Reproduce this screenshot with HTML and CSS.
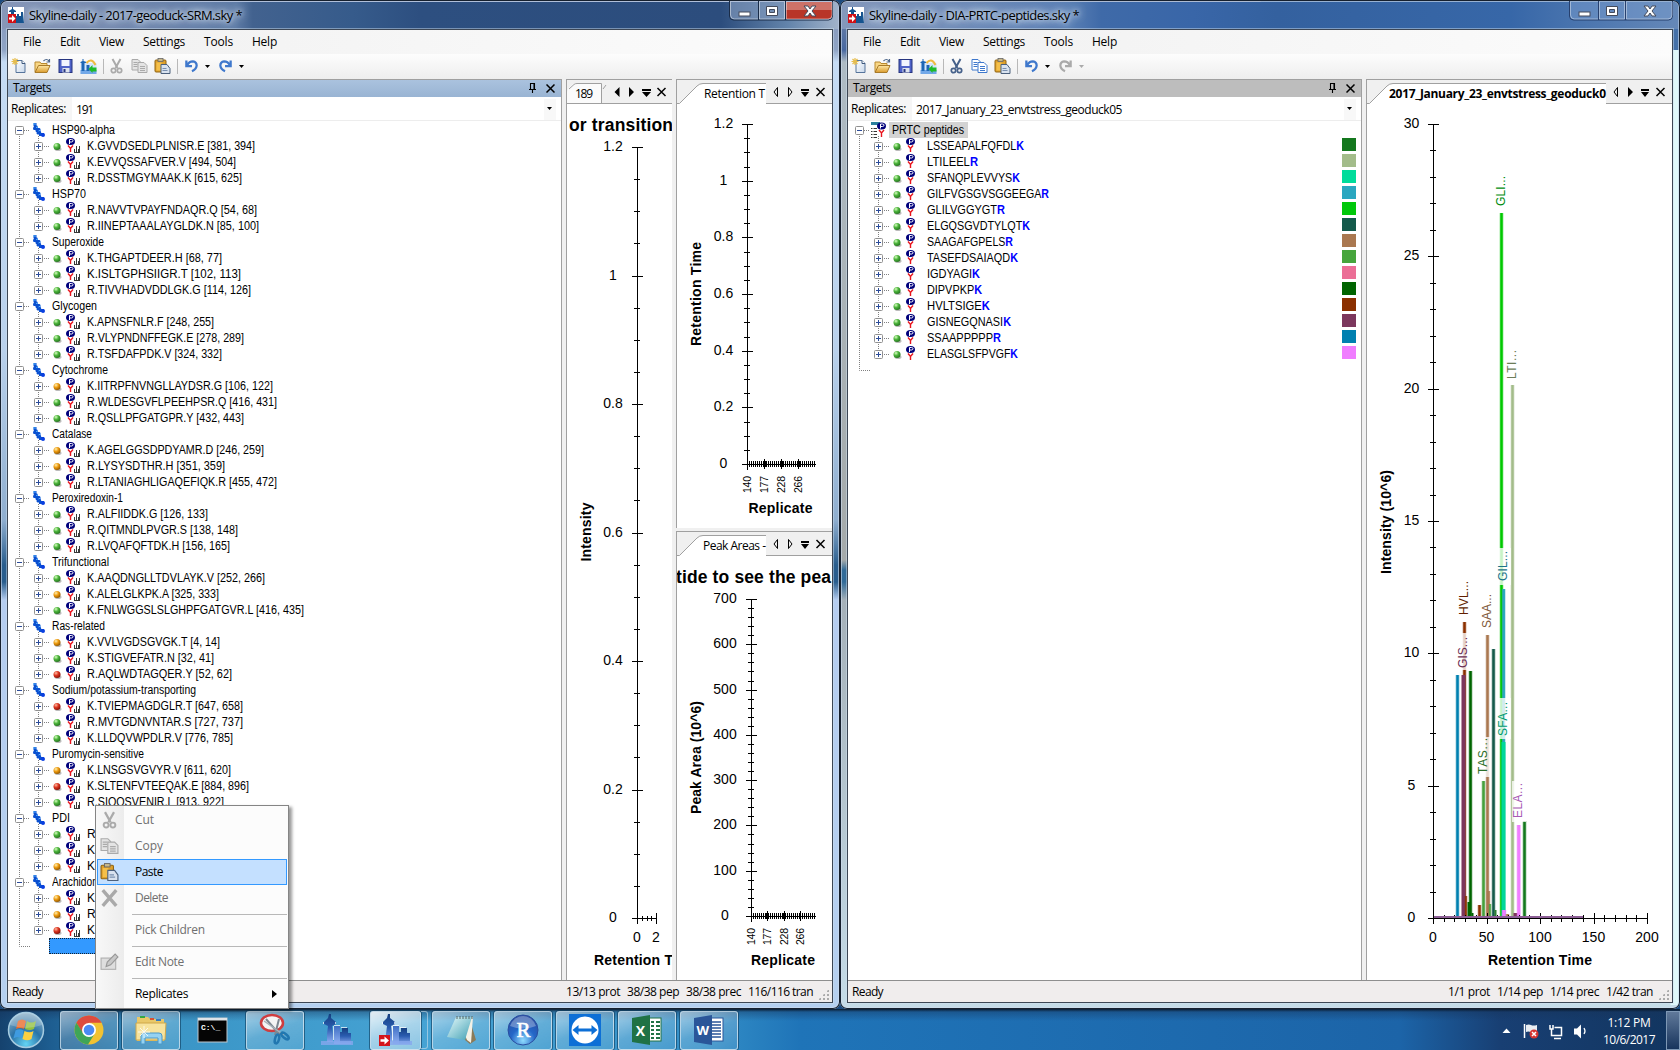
FILE: index.html
```html
<!DOCTYPE html>
<html lang="en">
<head>
<meta charset="utf-8">
<title>Skyline-daily</title>
<link rel="stylesheet" href="styles.css">
</head>
<body>
<svg class="sprite" aria-hidden="true">
  <defs>
    <linearGradient id="gPaper" x1="0" y1="0" x2="1" y2="1"><stop offset="0" stop-color="#fff"/><stop offset="1" stop-color="#c9d8ea"/></linearGradient>
    <linearGradient id="gFolder" x1="0" y1="0" x2="0" y2="1"><stop offset="0" stop-color="#ffe9a8"/><stop offset="1" stop-color="#d99a2b"/></linearGradient>
    <radialGradient id="gGreen" cx=".35" cy=".3" r=".7"><stop offset="0" stop-color="#d8ffc0"/><stop offset=".5" stop-color="#4cb43c"/><stop offset="1" stop-color="#287a20"/></radialGradient>
    <radialGradient id="gOrange" cx=".35" cy=".3" r=".7"><stop offset="0" stop-color="#fff0b0"/><stop offset=".5" stop-color="#ee9b10"/><stop offset="1" stop-color="#9a5d00"/></radialGradient>
    <radialGradient id="gRed" cx=".35" cy=".3" r=".7"><stop offset="0" stop-color="#ffb9a0"/><stop offset=".5" stop-color="#dc3520"/><stop offset="1" stop-color="#8d1208"/></radialGradient>
    <radialGradient id="gOrb" cx=".5" cy=".9" r=".9"><stop offset="0" stop-color="#62d4f4"/><stop offset=".5" stop-color="#2a73a8"/><stop offset="1" stop-color="#8fb2c8"/></radialGradient>
    <radialGradient id="gR" cx=".5" cy=".85" r=".9"><stop offset="0" stop-color="#8fdcff"/><stop offset=".45" stop-color="#2467c8"/><stop offset="1" stop-color="#2a4a9c"/></radialGradient>
    <linearGradient id="gCity" x1="0" y1="0" x2="0" y2="1"><stop offset="0" stop-color="#153f80"/><stop offset=".5" stop-color="#2a5cb0"/><stop offset="1" stop-color="#86a8ee"/></linearGradient>
    <linearGradient id="gCity2" x1="0" y1="0" x2="0" y2="1"><stop offset="0" stop-color="#3f6fc4"/><stop offset="1" stop-color="#8fb0f2"/></linearGradient>
    <linearGradient id="gPad" x1="0" y1="0" x2="1" y2="1"><stop offset="0" stop-color="#e8fbfb"/><stop offset="1" stop-color="#3f9fb4"/></linearGradient>
  </defs>
  <symbol id="i-app" viewBox="0 0 16 16"><rect width="16" height="16" fill="#fff"/><path d="M4 0h1v2l3 2v1H6v3H3V5H1V4l3-2zM9 7h2v9H8V9h1zM11 9h2v7h-2zM13 5h2l1 11h-3z" fill="#15538f"/><rect y="7" width="8" height="9" fill="#cf1016"/><path d="M1 10.500h3V8l3.500 3.500L4 15v-2.500H1z" fill="#fff"/></symbol>
  <symbol id="i-new" viewBox="0 0 16 16"><path d="M4.500 2.500h6l3 3v9h-9z" fill="url(#gPaper)" stroke="#56749b"/><path d="M10.500 2.500v3h3" fill="#fff" stroke="#3d587d"/><path d="M3.500 0v7M0 3.500h7M1 1l5 5M6 1L1 6" stroke="#e6bd4d" stroke-width="1.200"/></symbol>
  <symbol id="i-open" viewBox="0 0 16 16"><path d="M.5 14V4h5l1 1.500h6V8" fill="#f8d684" stroke="#b98a30"/><path d="M.5 14.500L4 7.500h11.500L12.500 14.500z" fill="url(#gFolder)" stroke="#a87a28"/><path d="M9 3q3-3 5.500 0M15 1v3h-3" fill="none" stroke="#50698c" stroke-width="1.200"/></symbol>
  <symbol id="i-save" viewBox="0 0 16 16"><rect x="1.500" y="1.500" width="13" height="13" fill="#4f62c8" stroke="#27357f"/><rect x="4" y="2" width="8" height="6" fill="#f1f4ff"/><rect x="5" y="10" width="7" height="4.500" fill="#dfe4ee"/><rect x="6" y="11" width="2" height="3" fill="#27357f"/></symbol>
  <symbol id="i-import" viewBox="0 0 16 16"><rect y="5" width="16" height="11" fill="#d5e6fa"/><rect y="12" width="16" height="4" fill="#72a8e8"/><path d="M2 1h1v2l3 1v1H4v8H1V5H0V4l2-1zM6 7h3v6H6z" fill="#1d67b5"/><path d="M6 5q5-6 9 2" fill="none" stroke="#efbb42" stroke-width="2"/><path d="M8 11l4-4v2.500h4v4h-4V15z" fill="#1dbb28"/></symbol>
  <symbol id="i-cut" viewBox="0 0 16 16"><path d="M4 1l5 9M12 1L7 10" fill="none" stroke="currentColor" stroke-width="2"/><circle cx="5" cy="12.500" r="2.200" fill="none" stroke="currentColor" stroke-width="1.700"/><circle cx="11" cy="12.500" r="2.200" fill="none" stroke="currentColor" stroke-width="1.700"/></symbol>
  <symbol id="i-copy" viewBox="0 0 16 16"><g fill="var(--sheet,#fff)" stroke="currentColor"><path d="M.5 1.500h6l2.500 2.500v8H.5z"/><path d="M6.500 4.500h6l3 3v7h-9z"/><path d="M2 4.500h4M2 6.500h4M2 8.500h4M8.500 8.500h5M8.500 10.500h5M8.500 12.500h5"/></g></symbol>
  <symbol id="i-paste" viewBox="0 0 16 16"><rect x=".5" y="2" width="11" height="12" rx="1" fill="#dfa12c" stroke="#916512"/><rect x="3.500" y=".5" width="5" height="3" fill="#c9b98a" stroke="#666" stroke-width=".8"/><path d="M2 4.500h5v8H2z" fill="#f5c04a"/><path d="M6.500 6.500h6l3 4v5h-9z" fill="#d8e2ef" stroke="#4b607d"/><path d="M8 10.500h4M8 12.500h5" stroke="#7890b0"/></symbol>
  <symbol id="i-undo" viewBox="0 0 16 16"><path d="M2.500 2v6h6M3.500 7q2-4 6-4 4 .5 4 4.500-.5 4-5 6" fill="none" stroke="currentColor" stroke-width="2.400"/></symbol>
  <symbol id="i-redo" viewBox="0 0 16 16"><path d="M13.500 2v6h-6M12.500 7q-2-4-6-4-4 .5-4 4.500.5 4 5 6" fill="none" stroke="currentColor" stroke-width="2.400"/></symbol>
  <symbol id="i-caret" viewBox="0 0 6 4"><path d="M0 0h5L2.500 3z" fill="currentColor"/></symbol>
  <symbol id="i-delete" viewBox="0 0 16 16"><path d="M2 1l12 14M14 1L2 15" stroke="#a9a9a9" stroke-width="3"/></symbol>
  <symbol id="i-note" viewBox="0 0 16 16"><rect x=".5" y="4.500" width="13" height="10" fill="#dedede" stroke="#b0b0b0"/><path d="M5 12l1-4L13 1l2.500 2.500L9 10.500z" fill="#c8c8c8" stroke="#989898"/></symbol>
  <symbol id="i-pin" viewBox="0 0 8 10"><path d="M1.500 6V.5h4V6M0 6.500h7M3.500 7v3M5 1v5" fill="none" stroke="#000" stroke-width="1.100"/></symbol>
  <symbol id="i-x" viewBox="0 0 9 9"><path d="M.5.5l8 8M8.500.5l-8 8" stroke="#000" stroke-width="1.500"/></symbol>
  <symbol id="i-pep" viewBox="0 0 16 14"><ellipse cx="4.500" cy="3.500" rx="4.500" ry="3.500" fill="#00007b"/><path d="M3.500 6V1.500h2q1.500 0 1.500 1.200T5.500 4H4" fill="none" stroke="#fff"/><path d="M2 7.500L4.500 10.500 7 7.500M4.500 10v4.500" fill="none" stroke="#e8141c" stroke-width="1.400"/></symbol>
  <symbol id="i-spec" viewBox="0 0 7 7"><path d="M1.500 3v3M3.500 0v6M5.500 3v3M1 6.500h6M6.500 0v6" stroke="#222" stroke-width=".9"/></symbol>
  <symbol id="i-prot" viewBox="0 0 13 14"><path d="M1.500 1.500h3M4 2L2.500 5.500 6 4.500M3.500 7.500l3.500-1-1 3.500 3-1M7 11.500h3l2 0" fill="none" stroke="#0a50d0" stroke-width="3" stroke-linejoin="round"/><circle cx="11" cy="12" r="2" fill="#0a3fe0"/><path d="M1 1h3M4 4.500l2-.5M6.500 8l2-1" stroke="#58b4ff" stroke-width="1"/></symbol>
  <symbol id="i-city" viewBox="0 0 32 32"><path d="M8 0h2v4l5 4v2l-4 2 1 8v8H6v-8l1-8-4-2V8l4-4z" fill="url(#gCity)"/><path d="M13 12h6v18h-6z" fill="url(#gCity2)"/><path d="M19 18h4v12h-4zM21 14h6v5h3v11h-9z" fill="url(#gCity)"/><path d="M2.500 8v2M14.500 8v2M13 11.500h6M20 13.500h6M12.500 12v14" stroke="#fff" opacity=".7"/><rect y="27" width="32" height="4" fill="#86a8ee" opacity=".8"/></symbol>
</svg>

<main class="desktop">
  <section class="window window-srm">
    <header class="titlebar">
      <svg class="app-icon"><use href="#i-app"/></svg>
      <h1 class="title"><span data-w="213">Skyline-daily - 2017-geoduck-SRM.sky *</span></h1>
      <div class="caption">
        <svg viewBox="0 0 104 21" width="104" height="21"><path d="M.5 0v15q0 4 4 4h95q4 0 4-4V0M29.500 0v19M56.500 0v19" fill="none" stroke="#1a2c48"/><path class="btn-min" d="M1 1h28v17H5q-4 0-4-4zM30 1h26v17H30z"/><path class="btn-close" d="M57 1h46v13q0 4-4 4H57z"/><path d="M57 1h46v8H57z" fill="#fff" opacity=".3"/><path d="M1.500 1v13q0 4 4 4H29M30.500 1v17h25V1M57.500 1v17H99q4 0 4-4V1" fill="none" stroke="#fff" opacity=".45"/><rect x="10" y="11" width="11" height="4" fill="#fff" stroke="#444b5c"/><path d="M37.500 5.500h11v9h-11zM40.500 8.500h5v3h-5z" fill="#fff" stroke="#444b5c" fill-rule="evenodd"/><path d="M75 5h4l2 3 2-3h4l-4 5 4 5h-4l-2-3-2 3h-4l4-5z" fill="#fff" stroke="#444b5c"/></svg>
      </div>
    </header>
    <div class="client">
      <nav class="menubar"><span data-w="18">File</span><span data-w="20">Edit</span><span data-w="25">View</span><span data-w="42">Settings</span><span data-w="29">Tools</span><span data-w="25">Help</span></nav>
      <div class="toolbar">
        <svg class="ic"><use href="#i-new"/></svg><svg class="ic"><use href="#i-open"/></svg><svg class="ic"><use href="#i-save"/></svg><svg class="ic"><use href="#i-import"/></svg><i class="sep"></i>
        <svg class="ic off"><use href="#i-cut"/></svg><svg class="ic off sheet-off"><use href="#i-copy"/></svg><svg class="ic"><use href="#i-paste"/></svg><i class="sep last"></i>
        <svg class="ic narrow blue"><use href="#i-undo"/></svg><svg class="caret"><use href="#i-caret"/></svg><svg class="ic narrow blue"><use href="#i-redo"/></svg><svg class="caret"><use href="#i-caret"/></svg>
      </div>
      <div class="dock dock-srm">
        <aside class="targets active">
          <h2 class="pane-title"><span data-w="38">Targets</span><svg class="pin"><use href="#i-pin"/></svg><svg class="close"><use href="#i-x"/></svg></h2>
          <div class="replicates"><label><span data-w="55">Replicates:</span></label><div class="combo"><span data-w="17">191</span><i><svg class="caret"><use href="#i-caret"/></svg></i></div></div>
          <div class="tree" id="tree-srm"></div>
        </aside>
        <section class="panel">
          <svg class="tabs" viewBox="567 80 106 24" width="106" height="24"><path d="M567 103V92q0-3 3-5l3-3h29v20z" fill="#fbfbfb"/><path d="M569 89l5-4.500q1-1 3-1h24.500V103M603 89l3-4" fill="none" stroke="#a0a0a0"/><path d="M567 103.500h106" stroke="#a0a0a0"/><text x="575" y="98" textLength="18">189</text><path d="M619.500 87v10l-5-5zM629 87v10l5-5zM642 89h9v2h-9zM642 92h9l-4.500 5z"/><path d="M657.500 88l8 8M665.500 88l-8 8" class="xx"/></svg>
          <svg class="chart" id="chart-chrom" viewBox="567 104 106 876" width="106" height="876"></svg>
        </section>
        <div class="stack">
          <section class="panel">
            <svg class="tabs" viewBox="677 80 155 24" width="155" height="24"><path d="M679 104l18-18q3-2 6-2h63v20z" fill="#fff"/><path d="M677 103.500h2.500L697 86q2.500-2.500 6-2.500h63M766 103.500h66" fill="none" stroke="#a0a0a0"/><text x="704" y="98" textLength="61">Retention T</text><path d="M777.500 87.500v9l-3.500-4.500zM788.500 87.500v9l3.500-4.500z" fill="none" stroke="#000"/><path d="M801 89h8v2h-8zM801 92h8l-4 5z"/><path d="M816.500 88l8 8M824.500 88l-8 8" class="xx"/></svg>
            <svg class="chart" id="chart-rt" viewBox="677 104 155 424" width="155" height="424"></svg>
          </section>
          <section class="panel">
            <svg class="tabs" viewBox="677 80 155 24" width="155" height="24"><path d="M679 104l18-18q3-2 6-2h63v20z" fill="#fff"/><path d="M677 103.500h2.500L697 86q2.500-2.500 6-2.500h63M766 103.500h66" fill="none" stroke="#a0a0a0"/><text x="703" y="98" textLength="63">Peak Areas -</text><path d="M777.500 87.500v9l-3.500-4.500zM788.500 87.500v9l3.500-4.500z" fill="none" stroke="#000"/><path d="M801 89h8v2h-8zM801 92h8l-4 5z"/><path d="M816.500 88l8 8M824.500 88l-8 8" class="xx"/></svg>
            <svg class="chart" id="chart-area" viewBox="677 556 155 424" width="155" height="424"></svg>
          </section>
        </div>
      </div>
      <footer class="statusbar"><span data-w="31">Ready</span><span class="counts"><b data-w="54">13/13 prot</b><b data-w="52">38/38 pep</b><b data-w="55">38/38 prec</b><b data-w="65">116/116 tran</b></span><i class="grip"></i></footer>
    </div>
  </section>

  <section class="window window-dia">
    <header class="titlebar">
      <svg class="app-icon"><use href="#i-app"/></svg>
      <h1 class="title"><span data-w="210">Skyline-daily - DIA-PRTC-peptides.sky *</span></h1>
      <div class="caption">
        <svg viewBox="0 0 104 21" width="104" height="21"><path d="M.5 0v15q0 4 4 4h95q4 0 4-4V0M29.500 0v19M56.500 0v19" fill="none" stroke="#27406e"/><path class="btn-min" d="M1 1h28v17H5q-4 0-4-4zM30 1h26v17H30z"/><path class="btn-close" d="M57 1h46v13q0 4-4 4H57z"/><path d="M1.500 1v13q0 4 4 4H29M30.500 1v17h25V1M57.500 1v17H99q4 0 4-4V1" fill="none" stroke="#fff" opacity=".4"/><rect x="10" y="11" width="11" height="4" fill="#fff" stroke="#444b5c"/><path d="M37.500 5.500h11v9h-11zM40.500 8.500h5v3h-5z" fill="#fff" stroke="#444b5c" fill-rule="evenodd"/><path d="M75 5h4l2 3 2-3h4l-4 5 4 5h-4l-2-3-2 3h-4l4-5z" fill="#fff" stroke="#444b5c"/></svg>
      </div>
    </header>
    <div class="client">
      <nav class="menubar"><span data-w="18">File</span><span data-w="20">Edit</span><span data-w="25">View</span><span data-w="42">Settings</span><span data-w="29">Tools</span><span data-w="25">Help</span></nav>
      <div class="toolbar">
        <svg class="ic"><use href="#i-new"/></svg><svg class="ic"><use href="#i-open"/></svg><svg class="ic"><use href="#i-save"/></svg><svg class="ic"><use href="#i-import"/></svg><i class="sep"></i>
        <svg class="ic steel"><use href="#i-cut"/></svg><svg class="ic blue"><use href="#i-copy"/></svg><svg class="ic"><use href="#i-paste"/></svg><i class="sep last"></i>
        <svg class="ic narrow blue"><use href="#i-undo"/></svg><svg class="caret"><use href="#i-caret"/></svg><svg class="ic narrow off"><use href="#i-redo"/></svg><svg class="caret off"><use href="#i-caret"/></svg>
      </div>
      <div class="dock dock-dia">
        <aside class="targets">
          <h2 class="pane-title"><span data-w="38">Targets</span><svg class="pin"><use href="#i-pin"/></svg><svg class="close"><use href="#i-x"/></svg></h2>
          <div class="replicates"><label><span data-w="55">Replicates:</span></label><div class="combo"><span data-w="206">2017_January_23_envtstress_geoduck05</span><i><svg class="caret"><use href="#i-caret"/></svg></i></div></div>
          <div class="tree" id="tree-dia"></div>
        </aside>
        <section class="panel">
          <svg class="tabs" viewBox="1367 80 305 24" width="305" height="24"><path d="M1369 104l18-18q3-2 6-2h213v20z" fill="#fff"/><path d="M1367 103.500h2.500L1387 86q2.500-2.500 6-2.500h213M1606 103.500h66" fill="none" stroke="#a0a0a0"/><text x="1389" y="98" textLength="217" font-weight="700">2017_January_23_envtstress_geoduck0</text><path d="M1617.500 87.500v9l-3.500-4.500z" fill="none" stroke="#000"/><path d="M1628 87v10l5-5zM1641 89h8v2h-8zM1641 92h8l-4 5z"/><path d="M1656.500 88l8 8M1664.500 88l-8 8" class="xx"/></svg>
          <svg class="chart" id="chart-dia" viewBox="1367 104 305 876" width="305" height="876"></svg>
        </section>
      </div>
      <footer class="statusbar"><span data-w="31">Ready</span><span class="counts"><b data-w="42">1/1 prot</b><b data-w="46">1/14 pep</b><b data-w="49">1/14 prec</b><b data-w="47">1/42 tran</b></span><i class="grip"></i></footer>
    </div>
  </section>

  <footer class="taskbar">
    <svg class="start" viewBox="0 0 40 40"><circle cx="20" cy="20" r="17.500" fill="url(#gOrb)" stroke="#a5cbe0" stroke-width="1.500"/><path d="M12 11q4-3 8 0l-2 8q-4-2-8 0z" fill="#e86a2a"/><path d="M21 11q4 3 9 0l-2 8q-4 2-9 0z" fill="#93c140"/><path d="M9.500 20.500q4-2.500 8 0l-2 8q-4-3-8 0z" fill="#3f9be0"/><path d="M18.500 21q5 2.500 9 0l-2 8q-4 2.500-9 0z" fill="#fbd043"/><path d="M4 15Q8 3 20 3t16 12q-16 6-32 0" fill="#fff" opacity=".22"/></svg>
    <span class="task"><svg viewBox="0 0 32 32"><circle cx="16" cy="16" r="14.500" fill="#f1c232"/><path d="M3.400 8.800A14.500 14.500 0 0 1 28.600 8.800H16L9.700 19.600z" fill="#dd4b3e"/><path d="M3.400 8.800A14.500 14.500 0 0 0 15 30.500l6.800-11-11 .8z" fill="#3fa557"/><circle cx="16" cy="16" r="7" fill="#fff"/><circle cx="16" cy="16" r="5.300" fill="#4a8af4"/></svg></span>
    <span class="task"><svg viewBox="0 0 32 32"><path d="M2 3h11l2 2h14v22H2z" fill="#e9c869"/><path d="M5 2h5v2H5z" fill="#35a845"/><path d="M15 4h4v2h-4z" fill="#d85132"/><path d="M21 5h5v2h-5z" fill="#367bc0"/><path d="M1 9h30l-1 17H1z" fill="#f7e39d" stroke="#cfa84a"/><path d="M6 30v-8q0-3 3-3h15q3 0 3 3v8h-4v-6H10v6z" fill="#95d2f2" stroke="#4a98c8"/><path d="M9 12v12M3 18h12M5 14l8 8M13 14l-8 8" stroke="#fff" opacity=".8"/></svg></span>
    <span class="task flat"><svg viewBox="0 0 32 32"><rect x="1" y="4" width="29" height="24" fill="#050505" stroke="#bfc6cc"/><path d="M1 4h29v2.500H1z" fill="#dfe4e8"/><text x="4" y="15.500" font-size="8" fill="#fff" font-family="Liberation Mono" font-weight="700">C:\_</text></svg></span>
    <span class="task"><svg viewBox="0 0 32 32"><ellipse cx="13" cy="9" rx="11" ry="8" fill="#f4f4f4" stroke="#cf3d3f" stroke-width="2.500"/><path d="M7 5l14 16M20 5l-4 16" stroke="#7d8791" stroke-width="2"/><path d="M5 7l20 14" stroke="#a9b1b8" stroke-width="1.500"/><ellipse cx="18" cy="25" rx="2" ry="4.500" fill="none" stroke="#2177b0" stroke-width="2.500" transform="rotate(15 18 25)"/><ellipse cx="26" cy="22" rx="2" ry="4.500" fill="none" stroke="#2177b0" stroke-width="2.500" transform="rotate(-50 26 22)"/></svg></span>
    <span class="task flat"><svg viewBox="0 0 32 32"><use href="#i-city"/></svg></span>
    <span class="task lit"><svg viewBox="0 0 32 32"><use href="#i-city"/><rect x="-1" y="21" width="11" height="11" fill="#d4151b"/><path d="M.5 25.300h4V22.500l4.500 4-4.500 4v-2.800h-4z" fill="#fff"/></svg></span><i class="stacked"></i>
    <span class="task"><svg viewBox="0 0 32 32"><path d="M24 3l7 23-6 4-5-4z" fill="#8a7a58"/><path d="M12 3h16l-2 26-4-3z" fill="#f4f1e6"/><path d="M11 3h16l-7 23-18-3z" fill="url(#gPad)"/><path d="M12 2v3M15 2v3M18 2v3M21 2v3M24 2v3M27 2v3" stroke="#566"/></svg></span>
    <span class="task"><svg viewBox="0 0 32 32"><circle cx="16" cy="16" r="15" fill="url(#gR)" stroke="#2b4ea0"/><path d="M3 12Q7 2 16 2t13 10q-13 5-26 0" fill="#fff" opacity=".3"/><text x="16.500" y="22.500" text-anchor="middle" font-family="Liberation Serif" font-size="21" fill="#fff" stroke="#fff" stroke-width=".6">R</text></svg></span>
    <span class="task"><svg viewBox="0 0 32 32"><rect width="32" height="32" fill="#0d6fd6"/><circle cx="16" cy="16" r="13.500" fill="#fff"/><path d="M3.500 16l6-5v3.500h13V11l6 5-6 5v-3.500h-13V21z" fill="#0d6fd6"/></svg></span>
    <span class="task"><svg viewBox="0 0 32 32"><rect x="17" y="4" width="13" height="23" fill="#fff" stroke="#207245"/><path d="M20 7h3v2h-3zM25 7h4v2h-4zM20 11h3v2h-3zM25 11h4v2h-4zM20 15h3v2h-3zM25 15h4v2h-4zM20 19h3v2h-3zM25 19h4v2h-4zM20 23h3v2h-3zM25 23h4v2h-4z" fill="#207245"/><path d="M1 4l18-3v30L1 28z" fill="#207245"/><text x="9.500" y="21.500" text-anchor="middle" font-size="14" font-weight="700" fill="#fff">X</text></svg></span>
    <span class="task"><svg viewBox="0 0 32 32"><rect x="17" y="4" width="13" height="23" fill="#fff" stroke="#2a5699"/><path d="M19 8h9M19 11h9M19 14h9M19 17h9M19 20h9M19 23h9" stroke="#2a5699" stroke-width="1.300"/><path d="M1 4l18-3v30L1 28z" fill="#2a5699"/><text x="9.800" y="21" text-anchor="middle" font-size="13" font-weight="700" fill="#fff">W</text></svg></span>
    <div class="tray">
      <svg viewBox="1500 1010 90 40" width="90" height="40"><path d="M1502.500 1033l4-4.500 4 4.500z" fill="#fff"/><path d="M1524.500 1024v14" stroke="#fff" stroke-width="1.500"/><path d="M1526 1025q3-1 5 0t6 0v7q-3 1-6 0t-5 0z" fill="#e8edf2"/><circle cx="1534" cy="1034" r="4.500" fill="#d63431"/><path d="M1532 1032l4 4M1536 1032l-4 4" stroke="#fff" stroke-width="1.500"/><path d="M1554.500 1027.500h7v8h-10v-6M1550 1025v4h3v-4M1551.500 1029v6M1554 1038.500h7" fill="none" stroke="#fff" stroke-width="1.500"/><path d="M1574 1028.500h3l4-4v14l-4-4h-3z" fill="#fff"/><path d="M1584 1028q2 3 0 6" fill="none" stroke="#fff" stroke-width="1.300"/></svg>
      <div class="clock"><span data-w="43">1:12 PM</span><span data-w="52">10/6/2017</span></div>
      <i class="peek"></i>
    </div>
  </footer>

  <div class="context-menu">
    <div class="item off sheet-off"><svg><use href="#i-cut"/></svg><span data-w="19">Cut</span></div>
    <div class="item off sheet-off"><svg><use href="#i-copy"/></svg><span data-w="28">Copy</span></div>
    <div class="item hot"><svg><use href="#i-paste"/></svg><span data-w="28">Paste</span></div>
    <div class="item off"><svg><use href="#i-delete"/></svg><span data-w="33">Delete</span></div>
    <hr>
    <div class="item off"><svg></svg><span data-w="70">Pick Children</span></div>
    <hr>
    <div class="item off"><svg><use href="#i-note"/></svg><span data-w="49">Edit Note</span></div>
    <hr>
    <div class="item"><svg></svg><span data-w="53">Replicates</span><i class="sub"></i></div>
  </div>
</main>
<script src="app.js"></script>
</body>
</html>
```
FILE: styles.css
```css
* { box-sizing: border-box; }
body { margin: 0; overflow: hidden; font: 12px "Open Sans", "Noto Sans", sans-serif; color: #000; background: #1b4a7e; }
.sprite { display: block; width: 0; height: 0; }
svg { display: block; flex: none; }
[data-w] { white-space: nowrap; flex: none; }
.desktop { position: relative; display: grid; grid-template: 1009px 41px / 840px 840px; width: 1680px; height: 1050px; }

.window { display: grid; grid-template-rows: 29px 974px; padding: 0 7px 6px; border-radius: 7px; box-shadow: inset 0 0 0 1px #16202e, inset 0 0 0 2px #cfdcee99; }
.window-srm { background: linear-gradient(#8294b8 0, #8fa4c5 50px, #c5dcf5 62px, #b9d1ec 350px, #8faecf 520px, #295d8d 565px, #295d8d 582px, #b5cdf0 600px, #b5d0f0); }
.window-srm .titlebar { background: linear-gradient(90deg, #8797b8, #5e7ba6 28%, #42628f 30%, #365b8b 42%, #2d4f80 50%, #2c4d7d 86%, #6384ab 94%, #a0b2ca); }
.window-dia { background: linear-gradient(90deg, transparent 420px, #4470a8 421px) 0 0 / 100% 50px no-repeat, linear-gradient(90deg, transparent 830px, #dff8fa 831px) 0 50px / 100% 955px no-repeat, linear-gradient(#7b8cab 0, #4868a0 50px, #aebbc4 62px, #a5aaaa 560px, #326b98 570px, #326b98 582px, #a5b0b8 600px, #c5dce8); }
.window-dia .titlebar { background: linear-gradient(90deg, #8498bb, #5b80b5 27%, #3f6aa8 31%, #3966a8 42%, #34619f 52%, #3767a8 80%, #6588b8); }
.titlebar { display: flex; align-items: center; margin: 2px 0 0 -5px; width: 836px; padding-left: 6px; height: 27px; border-radius: 5px 5px 0 0; }
.app-icon { width: 16px; height: 16px; margin-top: -1px; }
.title { margin: -2px 0 0 5px; font-size: 13px; font-weight: 400; text-shadow: 0 0 8px #cfdcec, 0 0 10px #cfdcec, 0 0 5px #cfdcec; }
.caption { margin: -8px 5px 0 auto; }
.btn-min { fill: #90a5c6; opacity: .55; }
.btn-close { fill: #b83528; }
.window-dia .btn-close, .window-dia .btn-min { fill: #7da0d0; opacity: .45; }

.client { display: grid; grid-template-rows: 24px 25px 901px 22px; width: 826px; border: 1px solid #3c4654; outline: 1px solid #cfe0f077; background: #f0f0f0; }
.menubar { display: flex; align-items: center; gap: 19px; padding: 0 0 1px 15px; background: linear-gradient(90deg, #f0f0f0, #fcfcfc); }
.toolbar { display: flex; align-items: center; gap: 6px; padding: 0 0 1px 3px; background: linear-gradient(#fdfdfd, #eeeeee); }
.ic { width: 17px; height: 16px; }
.narrow { width: 15px; margin-right: 1px; }
.toolbar .caret { margin: 1px 1px 0 -1px; }
.caret { width: 6px; height: 4px; }
.sep { width: 1px; height: 15px; margin: 0 -2px 0 0; background: #b8b8b8; }
.sep.last { margin-right: 0; }
.blue { color: #3f78cc; }
.steel { color: #46618a; }
.off { color: #aaa; }
.sheet-off { --sheet: #e4e4e4; }

.dock { display: grid; column-gap: 4px; }
.dock-srm { grid-template-columns: 554px 106px 156px; }
.dock-dia { grid-template-columns: 514px 306px; }
.targets { display: grid; grid-template-rows: 17px 24px 1fr; min-width: 0; border: solid #a0a0a0; border-width: 1px 1px 0 0; background: #fff; }
.pane-title { display: flex; align-items: center; margin: 0; padding: 0 4px 1px 5px; font-size: 12px; line-height: 16px; font-weight: 400; background: #bdbdbd; }
.active .pane-title { background: linear-gradient(#aac2de, #99b4d3); }
.pin { width: 8px; height: 10px; margin: 0 9px 0 auto; }
.close { width: 9px; height: 9px; }
.pane-title .close { margin-right: 2px; }
.replicates { display: flex; border-bottom: 1px solid #ededed; }
.replicates label { display: flex; align-items: center; width: 64px; padding-left: 3px; background: #f6f6f6; }
.combo { display: flex; align-items: center; flex: 1; padding: 1px 0 0 4px; }
.combo i { display: grid; place-items: center; width: 12px; height: 21px; margin-left: auto; margin-right: 5px; background: #f8f8f8; }
.tree { padding-top: 1px; overflow: hidden; font: 12px/16px "Liberation Sans", Arial, sans-serif; }
.tree [data-w] { display: inline-block; transform-origin: 0 50%; }
.row { display: flex; height: 16px; }
.row .art { height: 16px; }
.row.head { gap: 3px; }
.row b { color: #00f; }
.pick { width: 79px; margin-left: -3px; padding-left: 3px; background: #d3d3d3; }
.swatch { width: 14px; height: 13px; margin: 0 5px 0 auto; }
.blank { width: 180px; height: 16px; background: #3399ff; border: 1px dotted #123; }

.panel { display: grid; grid-template-rows: 24px 1fr; align-content: start; border: solid #a0a0a0; border-width: 1px 0 0 1px; background: #fff; overflow: hidden; }
.stack { display: grid; grid-template-rows: 449px 449px; row-gap: 3px; margin-left: -2px; padding-left: 2px; }
.tabs { background: #f0f0f0; font-size: 12px; }
.xx { stroke: #000; stroke-width: 1.500; }
.chart { font: 14px "Liberation Sans", Arial, sans-serif; }
.chart .axis { stroke: #000; shape-rendering: crispEdges; fill: none; }
.chart .bold { font-weight: 700; font-size: 14px; }
.chart .headline { font-weight: 700; font-size: 17.500px; }
.chart .small { font-size: 10.500px; }
.chart .peak { font-size: 12px; }

.statusbar { display: flex; align-items: center; padding: 0 2px 0 4px; border-top: 1px solid #8e8e8e; background: #f0eded; }
.counts { display: flex; gap: 7px; margin-left: auto; }
.counts b { font-weight: 400; }
.grip { width: 11px; height: 11px; margin: 6px 1px 0 5px; background: radial-gradient(circle, #aaa 1px, transparent 1.500px) 0 0 / 4px 4px; clip-path: polygon(100% 0, 100% 100%, 0 100%); }

.taskbar { grid-column: 1 / 3; display: flex; align-items: center; padding: 1px 0 0 6px; background: linear-gradient(#0b1c30 0, #16335a66 3px, transparent 12px), linear-gradient(90deg, #15426e, #1d5d90 50px, #3a95c6 170px, #46a3d4 430px, #3490c8 700px, #1f74b8 800px, #1c64a8 1400px, #183f73 1500px, #12355f); }
.start { width: 40px; height: 40px; margin-right: 14px; }
.task { display: grid; place-items: center; width: 58px; height: 39px; margin-right: 4px; border: 1px solid #cde0eccc; border-radius: 3px; background: linear-gradient(160deg, #ffffff88, #ffffff30 50%, #ffffff18); box-shadow: 0 0 0 1px #0d3a5a99; }
.task svg { width: 32px; height: 32px; overflow: visible; }
.flat { border-color: transparent; background: none; box-shadow: none; }
.lit { width: 51px; margin-right: 0; background: linear-gradient(160deg, #ffffffdd, #ffffff88 50%, #ffffff60); }
.stacked { width: 7px; height: 38px; margin-right: 4px; border: solid #cde0ec99; border-width: 1px 1px 1px 0; border-radius: 0 3px 3px 0; }
.tray { display: flex; align-items: center; margin-left: auto; color: #fff; }
.clock { display: grid; justify-items: center; width: 64px; margin: 1px 0 0 7px; line-height: 17px; }
.peek { width: 14px; height: 39px; margin-left: 5px; border: 1px solid #7e98b5; background: linear-gradient(#60799a, #17345c); }

.context-menu { position: absolute; left: 95px; top: 805px; display: grid; grid-auto-rows: auto; width: 194px; height: 204px; padding: 1px; align-content: start; border: 1px solid #858585; background: linear-gradient(90deg, #f8f8f8 0, #ececec 28px, #fcfcfc 28px); box-shadow: 3px 2px 3px #0006; }
.item { display: flex; align-items: center; height: 26px; padding: 0 0 1px 3px; color: #000; }
.item.off { color: #6f6f6f; }
.item svg { width: 19px; height: 18px; margin-right: 16px; color: #aaa; }
.item.hot { height: 26px; padding-left: 2px; border: 1px solid #3399ff; background: #c4e0ff; }
.item .sub { margin-left: auto; margin-right: 10px; border: solid transparent; border-width: 4px 0 4px 5px; border-left-color: #000; }
.context-menu hr { width: 155px; height: 1px; margin: 3px 0 2px 35px; border: 0; background: #b8b8b8; }
```
FILE: app.js
```js
// Tree data: [label, label width, marker]; rows without a marker are protein groups.
const srm = [
  ['HSP90-alpha', 63], ['K.GVVDSEDLPLNISR.E [381, 394]', 168, 'Green'], ['K.EVVQSSAFVER.V [494, 504]', 149, 'Green'], ['R.DSSTMGYMAAK.K [615, 625]', 155, 'Green'],
  ['HSP70', 34], ['R.NAVVTVPAYFNDAQR.Q [54, 68]', 170, 'Green'], ['R.IINEPTAAALAYGLDK.N [85, 100]', 172, 'Green'],
  ['Superoxide', 52], ['K.THGAPTDEER.H [68, 77]', 135, 'Green'], ['K.ISLTGPHSIIGR.T [102, 113]', 154, 'Green'], ['R.TIVVHADVDDLGK.G [114, 126]', 164, 'Green'],
  ['Glycogen', 45], ['K.APNSFNLR.F [248, 255]', 127, 'Green'], ['R.VLYPNDNFFEGK.E [278, 289]', 157, 'Green'], ['R.TSFDAFPDK.V [324, 332]', 135, 'Green'],
  ['Cytochrome', 56], ['K.IITRPFNVNGLLAYDSR.G [106, 122]', 186, 'Orange'], ['R.WLDESGVFLPEEHPSR.Q [416, 431]', 190, 'Green'], ['R.QSLLPFGATGPR.Y [432, 443]', 157, 'Green'],
  ['Catalase', 40], ['K.AGELGGSDPDYAMR.D [246, 259]', 177, 'Orange'], ['R.LYSYSDTHR.H [351, 359]', 138, 'Orange'], ['R.LTANIAGHLIGAQEFIQK.R [455, 472]', 190, 'Green'],
  ['Peroxiredoxin-1', 71], ['R.ALFIIDDK.G [126, 133]', 121, 'Green'], ['R.QITMNDLPVGR.S [138, 148]', 151, 'Green'], ['R.LVQAFQFTDK.H [156, 165]', 143, 'Green'],
  ['Trifunctional', 57], ['K.AAQDNGLLTDVLAYK.V [252, 266]', 178, 'Green'], ['K.ALELGLKPK.A [325, 333]', 132, 'Orange'], ['K.FNLWGGSLSLGHPFGATGVR.L [416, 435]', 217, 'Green'],
  ['Ras-related', 53], ['K.VVLVGDSGVGK.T [4, 14]', 133, 'Orange'], ['K.STIGVEFATR.N [32, 41]', 127, 'Green'], ['R.AQLWDTAGQER.Y [52, 62]', 145, 'Red'],
  ['Sodium/potassium-transporting', 144], ['K.TVIEPMAGDGLR.T [647, 658]', 156, 'Red'], ['R.MVTGDNVNTAR.S [727, 737]', 156, 'Green'], ['K.LLDQVWPDLR.V [776, 785]', 146, 'Green'],
  ['Puromycin-sensitive', 92], ['K.LNSGSVGVYR.V [611, 620]', 144, 'Orange'], ['K.SLTENFVTEEQAK.E [884, 896]', 162, 'Red'], ['R.SIQQSVENIR.L [913, 922]', 137, 'Green'],
  ['PDI', 18], ['R', 8, 'Green'], ['K', 8, 'Green'], ['K', 8, 'Orange'],
  ['Arachidonate', 60], ['K', 8, 'Orange'], ['R', 8, 'Orange'], ['K', 8, 'Red']
];
const dia = [
  ['LSSEAPALFQFDLK', 97, '#14781e'], ['LTILEELR', 51, '#a3bc8a'], ['SFANQPLEVVYSK', 93, '#00dc9b'], ['GILFVGSGVSGGEEGAR', 122, '#2aa7c0'],
  ['GLILVGGYGTR', 78, '#00c80a'], ['ELGQSGVDTYLQTK', 103, '#145a4b'], ['SAAGAFGPELSR', 86, '#aa7850'], ['TASEFDSAIAQDK', 91, '#46a53c'],
  ['IGDYAGIK', 53, '#eb6e96'], ['DIPVPKPK', 55, '#006400'], ['HVLTSIGEK', 63, '#8b3000'], ['GISNEGQNASIK', 84, '#7c375d'],
  ['SSAAPPPPPR', 74, '#0080b0'], ['ELASGLSFPVGFK', 91, '#f07dff']
];

const dots = d => `<path d="${d}" stroke="#808080" stroke-dasharray="1 1" fill="none"/>`;
const box = (x, plus) => `<rect x="${x + .5}" y="4.500" width="8" height="8" rx="1" fill="#fff" stroke="#909090"/><path d="M${x + 2} 8.500h5${plus ? `M${x + 4.500} 6v5` : ''}" stroke="#2b4b99"/>`;

function headArt(icon, first) {
  return `<svg class="art" width="41" viewBox="0 0 41 16" overflow="visible">${dots(`M11.500 ${first ? 8 : 0}V16M16 8.500h6`)}${dots('M30.500 14v2')}${box(7, false)}${icon}</svg>`;
}
function childArt(marker, spectrum, last) {
  return `<svg class="art" width="79" viewBox="0 0 79 16">${dots(`M30.500 0V${last ? 8 : 16}M36 8.500h5`)}${dots('M11.500 0V16')}${box(26, true)}` +
    (marker ? `<ellipse cx="50" cy="11" rx="3.500" ry="2" fill="#bbb"/><circle cx="49" cy="8.500" r="3.500" fill="url(#g${marker})"/>` : '') +
    `<use href="#i-pep" x="58" y="0" width="16" height="14"/>${spectrum ? '<use href="#i-spec" x="65" y="8" width="7" height="7"/>' : ''}</svg>`;
}

document.getElementById('tree-srm').innerHTML = srm.map(([label, w, marker], i) => {
  const last = !srm[i + 1] || !srm[i + 1][2];
  return marker
    ? `<div class="row">${childArt(marker, true, last)}<span data-w="${w}">${label}</span></div>`
    : `<div class="row head">${headArt('<use href="#i-prot" x="24" y="1" width="13" height="14"/>', i === 0)}<span data-w="${w}">${label}</span></div>`;
}).join('') + `<div class="row"><svg class="art" width="41" viewBox="0 0 41 16">${dots('M11.500 0V8.500H22')}</svg><div class="blank"></div></div>`;

const listIcon = '<path d="M23 1.500h9" stroke="#2a7f9c" stroke-width="3"/><path d="M23 6.500h6M23 9.500h6M23 12.500h6M23 15.500h6" stroke="#333" stroke-dasharray="1.500 1 4"/><use href="#i-pep" x="29" y="0" width="16" height="15"/>';
document.getElementById('tree-dia').innerHTML =
  `<div class="row head">${headArt(listIcon, true)}<span class="pick"><span data-w="72">PRTC peptides</span></span></div>` +
  dia.map(([seq, w, color], i) =>
    `<div class="row">${childArt(seq === 'IGDYAGIK' ? '' : 'Green', false, i === 13)}<span data-w="${w}">${seq.slice(0, -1)}<b>${seq.slice(-1)}</b></span><i class="swatch" style="background:${color}"></i></div>`).join('') +
  `<div class="row"><svg class="art" width="41" viewBox="0 0 41 16">${dots('M11.500 0V8.500H22')}</svg></div>`;

// Chart helpers
const text = (s, x, y, len, cls = '', anchor = 'middle') =>
  `<text x="${x}" y="${y}" class="${cls}" text-anchor="${anchor}" ${len ? `textLength="${len}"` : ''}>${s}</text>`;
const turned = (s, x, y, len, cls, fill = '#000') =>
  `<text transform="translate(${x} ${y}) rotate(-90)" class="${cls}" fill="${fill}" ${len ? `textLength="${len}"` : ''}>${s}</text>`;
function yAxis(x, top, bottom, labels, minor, labelX, anchor) {
  const step = (bottom - top) / (labels.length - 1);
  let d = `M${x + .5} ${top}V${bottom + 6}`, out = '';
  labels.forEach((s, i) => {
    const y = Math.round(top + i * step);
    d += `M${x - 5} ${y + .5}h11`;
    out += text(s, labelX, y + 4, 0, '', anchor);
    if (i < labels.length - 1) for (let k = 1; k < minor; k++) d += `M${x - 3} ${Math.round(top + (i + k / minor) * step) + .5}h6`;
  });
  return `<path class="axis" d="${d}"/>` + out;
}
function replicateAxis(x, y, labelY) {
  let d = `M${x} ${y + .5}H816`;
  for (let k = x + 2; k < 816; k += (k % 17 ? 2 : 1)) d += `M${k + .5} ${y - 3}v6`;
  let out = '';
  ['140', '177', '228', '266'].forEach((s, i) => {
    const tx = Math.round(x + i * (x === 747 ? 17 : 16.300));
    d += `M${tx + .5} ${y - 5}v10`;
    out += turned(s, tx + 4, labelY, 17, 'small');
  });
  return `<path class="axis" d="${d}"/>` + out;
}

document.getElementById('chart-chrom').innerHTML =
  text('or transition', 569, 131, 104, 'headline', 'start') +
  yAxis(637, 147, 918, ['1.2', '1', '0.8', '0.6', '0.4', '0.2', '0'], 4, 613, 'middle') +
  '<path class="axis" d="M637 918.500h20M642.500 916v5M647.500 916v5M651.500 916v5M656.500 913v11"/>' +
  text('0', 637, 942) + text('2', 656, 942) +
  text('Retention T', 594, 965, 79, 'bold', 'start') + turned('Intensity', 591, 561.500, 59, 'bold');

document.getElementById('chart-rt').innerHTML =
  yAxis(747, 124, 464, ['1.2', '1', '0.8', '0.6', '0.4', '0.2', '0'], 4, 723.500, 'middle') + replicateAxis(747, 464, 493) +
  text('Replicate', 780.500, 513, 64, 'bold') + turned('Retention Time', 701, 346, 104, 'bold');

document.getElementById('chart-area').innerHTML =
  text('tide to see the pea', 676, 582.500, 155, 'headline', 'start') +
  yAxis(751, 599, 916, ['700', '600', '500', '400', '300', '200', '100', '0'], 5, 725, 'middle') + replicateAxis(751, 916, 945) +
  text('Replicate', 783, 965, 64, 'bold') + turned('Peak Area (10^6)', 701, 814, 113, 'bold');

// Chromatogram peaks: [x, top, colour, width]
const peaks = [
  [1457.500, 675, '#0080b0', 3], [1464.500, 622, '#8b3000', 3], [1463.500, 675, '#7c375d', 4], [1466, 896, '#8b3000', 2], [1470.500, 671, '#006400', 3],
  [1469, 902, '#006400', 3], [1472.500, 913, '#006400', 2], [1479.500, 905, '#8b3000', 3], [1483.500, 781, '#46a03c', 3], [1487.500, 635, '#aa7850', 3], [1488.500, 891, '#aa7850', 3], [1490, 904, '#46a53c', 2],
  [1493.500, 649, '#145a4b', 3], [1495.500, 910, '#2c8030', 2], [1501.500, 213, '#00c800', 3], [1503.700, 589, '#2aa5c0', 3],
  [1512.500, 385, '#a3bc8a', 3], [1503.500, 742, '#00d79b', 4], [1504, 910, '#f07dff', 4], [1507.500, 914, '#aa7850', 3], [1516, 913, '#7c375d', 5],
  [1518.700, 825, '#f07dff', 3.500], [1524.500, 821, '#14781e', 3]
];
// Peak annotations: [text, x, bottom, length, colour, backdrop top, backdrop bottom]
const notes = [
  ['GLI...', 1505, 206, 30, '#008c10'], ['LTI...', 1516, 379, 29, '#6c7c58'], ['GIL...', 1507, 581, 30, '#1c7488', 548, 585],
  ['HVL...', 1468, 615, 34, '#611f00'], ['GIS...', 1467, 668, 31, '#6a2e50', 633, 670], ['SAA...', 1491, 628, 34, '#80583a'],
  ['TAS...', 1487, 774, 36, '#2c6e28', 737, 777], ['SFA...', 1507, 736, 34, '#009a70', 698, 739], ['ELA...', 1522, 818, 35, '#a85bb5', 781, 822]
];
let xTicks = 'M1433 918.500H1648';
for (let i = 0; i <= 20; i++) xTicks += `M${Math.round(1433 + i * 10.700) + .5} ${i % 5 ? '915v7' : '913v11'}`;
document.getElementById('chart-dia').innerHTML =
  peaks.map(([x, y, c, w]) => `<path d="M${x} 917V${y}" stroke="${c}" stroke-width="${w + 1}" opacity=".35"/><path d="M${x} 917V${y}" stroke="${c}" stroke-width="${w - .5}"/>`).join('') +
  notes.map(([s, x, y, len, c, a, b]) => (a ? `<rect x="${x - 10}" y="${a}" width="14" height="${b - a}" fill="#fff" opacity=".78"/>` : '') + turned(s, x, y, len, 'peak', c)).join('') +
  yAxis(1433, 124, 918, ['30', '25', '20', '15', '10', '5', '0'], 5, 1411.500, 'middle') +
  `<path class="axis" d="${xTicks}"/>` +
  '<path d="M1434 917H1583" stroke="#8d5f96" stroke-width="2"/>' +
  ['0', '50', '100', '150', '200'].map((s, i) => text(s, 1433 + i * 53.500, 942)).join('') +
  text('Retention Time', 1540, 965, 104, 'bold') + turned('Intensity (10^6)', 1390.500, 574, 104, 'bold');

// Fit each label to its column width: tree labels are condensed, the others are spaced.
document.querySelectorAll('[data-w]').forEach(el => {
  const natural = el.getBoundingClientRect().width;
  const n = el.textContent.length;
  if (n < 2) return;
  if (el.closest('.tree')) el.style.transform = `scaleX(${(+el.dataset.w / natural).toFixed(4)})`;
  else el.style.letterSpacing = ((+el.dataset.w - natural) / n).toFixed(3) + 'px';
});
```
